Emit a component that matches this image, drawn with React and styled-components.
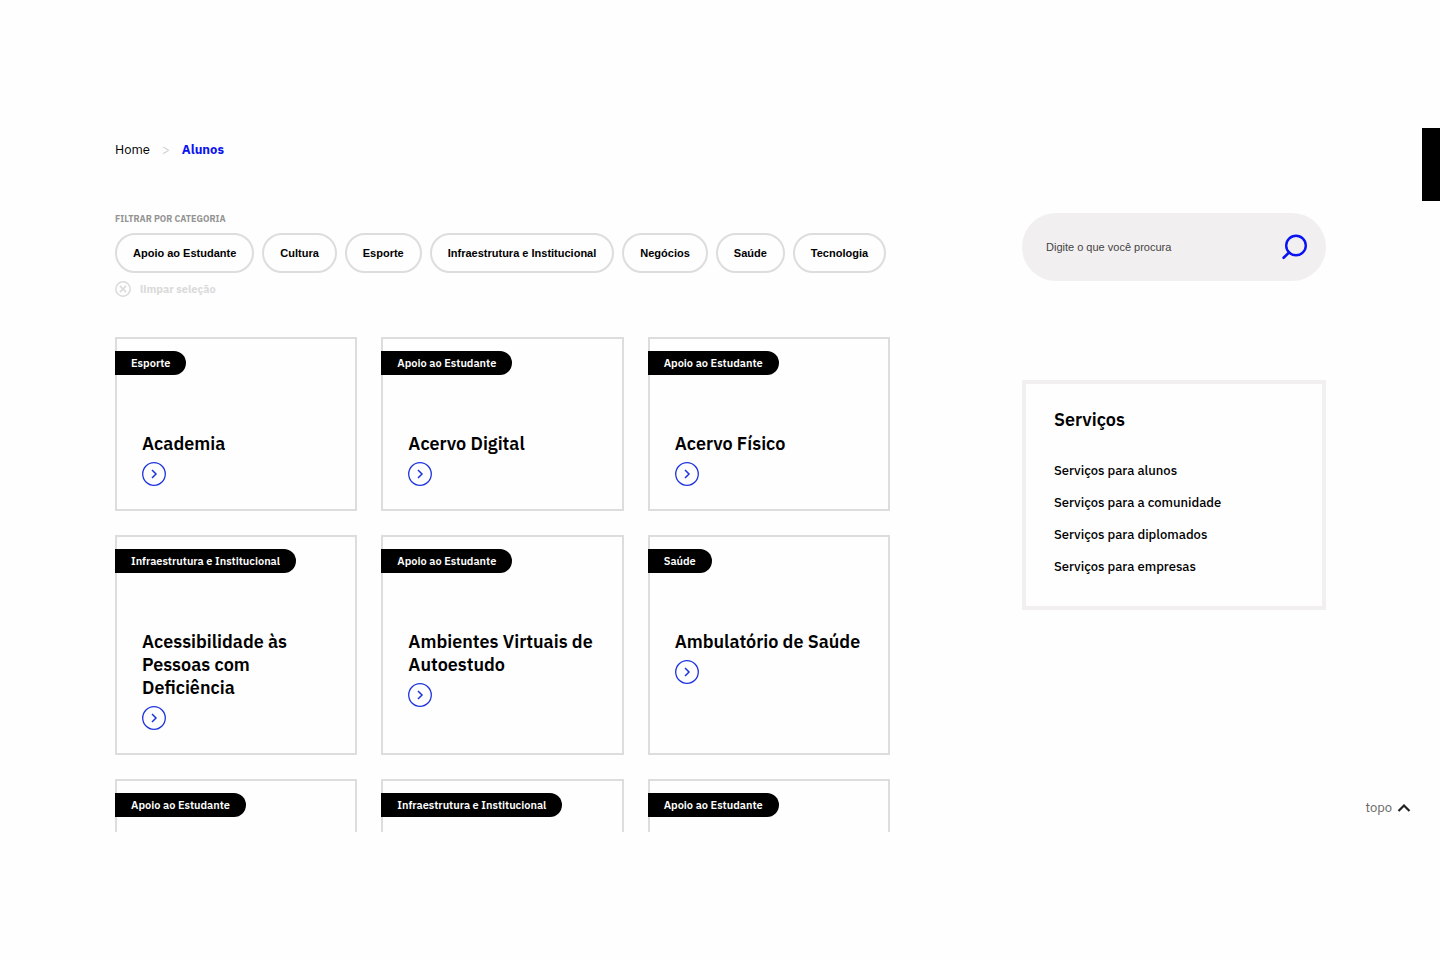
import styled, {createGlobalStyle} from 'styled-components';

const COLORS = {
  dark: '#000000',
  text: '#222222',
  muted: '#949494',
  disabled: '#dadada',
  border: '#dddddd',
  surface: '#f2eff0',
  primary: '#0a14f0',
  action: '#1f35dc',
  light: '#fefefe',
};

const GlobalStyle = createGlobalStyle`
  *{
    box-sizing: border-box;
  }
  body{
    margin: 0;
    background: ${COLORS.light};
    color: ${COLORS.dark};
    font-family: 'IBM Plex Sans', Inter, 'Noto Sans', sans-serif;
  }
  a{
    color: inherit;
    text-decoration: none;
  }
  h2, h3, ul, ol{
    margin: 0;
    padding: 0;
    list-style: none;
  }
  button{
    cursor: pointer;
  }
`;

const Viewport = styled('div')`
  position: relative;
  height: calc(100vh - 256px);
  margin: 128px 0;
  padding: 12px 114px 0 115px;
  overflow: hidden;
  @media(max-width: 767px){
    padding: 12px 24px 0;
  }
`;

const Breadcrumb = styled('ol')`
  display: flex;
  align-items: center;
  gap: 12px;
  height: 20px;
  margin-bottom: 53px;
  font-size: 13px;
  line-height: 20px;
`;

const Separator = styled('li')`
  color: #cccccc;
`;

const Current = styled('li')`
  color: ${COLORS.primary};
  font-weight: 700;
`;

const Layout = styled('div')`
  display: grid;
  grid-template-columns: minmax(0, 1fr) 304px;
  column-gap: 132px;
  align-items: start;
  @media(max-width: 1023px){
    grid-template-columns: minmax(0, 1fr);
    row-gap: 32px;
  }
`;

const FilterLabel = styled('div')`
  height: 12px;
  margin-bottom: 8px;
  color: ${COLORS.muted};
  font-size: 9px;
  font-weight: 700;
  line-height: 12px;
  text-transform: uppercase;
`;

const FilterList = styled('div')`
  display: flex;
  flex-wrap: wrap;
  gap: 8px;
`;

const FilterButton = styled('button')`
  height: 40px;
  padding: 0 16px;
  border: 2px solid ${COLORS.border};
  border-radius: 20px;
  background: transparent;
  color: ${COLORS.dark};
  font-family: 'Liberation Sans', Arial, sans-serif;
  font-size: 11px;
  font-weight: 700;
`;

const ClearButton = styled('button')`
  display: flex;
  align-items: center;
  gap: 9px;
  height: 16px;
  margin: 8px 0 40px;
  padding: 0;
  border: 0;
  background: transparent;
  color: ${COLORS.disabled};
  font-family: inherit;
  font-size: 11px;
  font-weight: 700;
`;

const CardGrid = styled('div')`
  display: grid;
  grid-template-columns: repeat(3, minmax(0, 1fr));
  gap: 24px;
  @media(max-width: 767px){
    grid-template-columns: minmax(0, 1fr);
  }
`;

const Card = styled('a')`
  display: flex;
  flex-direction: column;
  align-items: flex-start;
  min-height: 174px;
  padding: 12px 25px 23px;
  border: 2px solid ${COLORS.border};
`;

const Tag = styled('span')`
  height: 24px;
  margin: 0 0 57px -27px;
  padding: 0 16px;
  border-radius: 0 12px 12px 0;
  background: ${COLORS.dark};
  color: ${COLORS.light};
  font-size: 11px;
  font-weight: 600;
  line-height: 24px;
  white-space: nowrap;
`;

const CardTitle = styled('h3')`
  margin-bottom: 7px;
  font-size: 18px;
  font-weight: 600;
  line-height: 23px;
`;

const Sidebar = styled('aside')`
  display: flex;
  flex-direction: column;
  gap: 99px;
`;

const SearchForm = styled('form')`
  display: flex;
  align-items: center;
  justify-content: space-between;
  height: 68px;
  padding: 0 19px 0 24px;
  border-radius: 34px;
  background: ${COLORS.surface};
`;

const SearchInput = styled('input')`
  flex: 1;
  min-width: 0;
  padding: 0;
  border: 0;
  outline: 0;
  background: transparent;
  color: ${COLORS.text};
  font-family: 'Liberation Sans', Arial, sans-serif;
  font-size: 11px;
  &::placeholder{
    color: #444444;
    opacity: 1;
  }
`;

const SearchButton = styled('button')`
  display: flex;
  padding: 0;
  border: 0;
  background: transparent;
  color: ${COLORS.primary};
`;

const ServiceBox = styled('nav')`
  padding: 24px 28px 23px;
  border: 4px solid ${COLORS.surface};
  h2{
    margin-bottom: 23px;
    font-size: 18px;
    font-weight: 600;
    line-height: 24px;
  }
  li{
    font-size: 13px;
    font-weight: 500;
    line-height: 32px;
  }
`;

const SideTab = styled('button')`
  position: absolute;
  top: 0;
  right: 0;
  width: 18px;
  height: 73px;
  padding: 0;
  border: 0;
  background: ${COLORS.dark};
`;

const TopLink = styled('a')`
  position: absolute;
  right: 29px;
  bottom: 14px;
  display: flex;
  align-items: center;
  gap: 5px;
  color: #666666;
  font-size: 13px;
  line-height: 20px;
`;

const CATEGORIES = [
  'Apoio ao Estudante',
  'Cultura',
  'Esporte',
  'Infraestrutura e Institucional',
  'Negócios',
  'Saúde',
  'Tecnologia',
];

const CARDS = [
  {tag: 'Esporte', title: 'Academia'},
  {tag: 'Apoio ao Estudante', title: 'Acervo Digital'},
  {tag: 'Apoio ao Estudante', title: 'Acervo Físico'},
  {tag: 'Infraestrutura e Institucional', title: 'Acessibilidade às Pessoas com Deficiência'},
  {tag: 'Apoio ao Estudante', title: 'Ambientes Virtuais de Autoestudo'},
  {tag: 'Saúde', title: 'Ambulatório de Saúde'},
  {tag: 'Apoio ao Estudante'},
  {tag: 'Infraestrutura e Institucional'},
  {tag: 'Apoio ao Estudante'},
];

const SERVICES = [
  'Serviços para alunos',
  'Serviços para a comunidade',
  'Serviços para diplomados',
  'Serviços para empresas',
];

const ArrowIcon = () => (
  <svg width="24" height="24" viewBox="0 0 24 24" fill="none" stroke={COLORS.action} aria-hidden="true">
    <circle cx="12" cy="12" r="11.3" strokeWidth="1.3" />
    <path d="M10 7.9 14 12 10 16.1" strokeWidth="1.5" />
  </svg>
);

const ClearIcon = () => (
  <svg width="16" height="16" viewBox="0 0 16 16" fill="none" stroke="currentColor" aria-hidden="true">
    <circle cx="8" cy="8" r="7.2" strokeWidth="1.5" />
    <path d="M4.9 4.9l6.2 6.2M11.1 4.9l-6.2 6.2" strokeWidth="1.5" />
  </svg>
);

const SearchIcon = () => (
  <svg width="26" height="26" viewBox="0 0 26 26" fill="none" stroke="currentColor" strokeLinecap="round" aria-hidden="true">
    <circle cx="15" cy="11.5" r="9.8" strokeWidth="2.4" />
    <path d="M8 18.5 2.6 23.8" strokeWidth="2.6" />
  </svg>
);

const ChevronUpIcon = () => (
  <svg width="14" height="10" viewBox="0 0 14 10" fill="none" stroke={COLORS.text} aria-hidden="true">
    <path d="M1.5 8 7 2.5 12.5 8" strokeWidth="2.2" />
  </svg>
);

const App = () => {
  return (
    <>
      <GlobalStyle />
      <Viewport id="topo">
        <Breadcrumb>
          <li><a href="#home">Home</a></li>
          <Separator aria-hidden="true">&gt;</Separator>
          <Current><a href="#alunos" aria-current="page">Alunos</a></Current>
        </Breadcrumb>
        <Layout>
          <main>
            <FilterLabel id="filterLabel">Filtrar por categoria</FilterLabel>
            <FilterList role="group" aria-labelledby="filterLabel">
              {CATEGORIES.map((category) => (
                <FilterButton key={category} type="button">{category}</FilterButton>
              ))}
            </FilterList>
            <ClearButton type="button">
              <ClearIcon />
              limpar seleção
            </ClearButton>
            <CardGrid>
              {CARDS.map(({tag, title}, index) => (
                <Card key={index} href="#conteudo">
                  <Tag>{tag}</Tag>
                  {title && (
                    <>
                      <CardTitle>{title}</CardTitle>
                      <ArrowIcon />
                    </>
                  )}
                </Card>
              ))}
            </CardGrid>
          </main>
          <Sidebar>
            <SearchForm role="search" onSubmit={(e) => e.preventDefault()}>
              <SearchInput type="text" aria-label="Digite o que você procura" placeholder="Digite o que você procura" />
              <SearchButton type="submit" aria-label="Buscar">
                <SearchIcon />
              </SearchButton>
            </SearchForm>
            <ServiceBox aria-labelledby="servicesTitle">
              <h2 id="servicesTitle">Serviços</h2>
              <ul>
                {SERVICES.map((service) => (
                  <li key={service}><a href="#servicos">{service}</a></li>
                ))}
              </ul>
            </ServiceBox>
          </Sidebar>
        </Layout>
        <SideTab type="button" aria-label="Abrir menu" />
        <TopLink href="#topo">
          topo
          <ChevronUpIcon />
        </TopLink>
      </Viewport>
    </>
  );
};

export default App;
